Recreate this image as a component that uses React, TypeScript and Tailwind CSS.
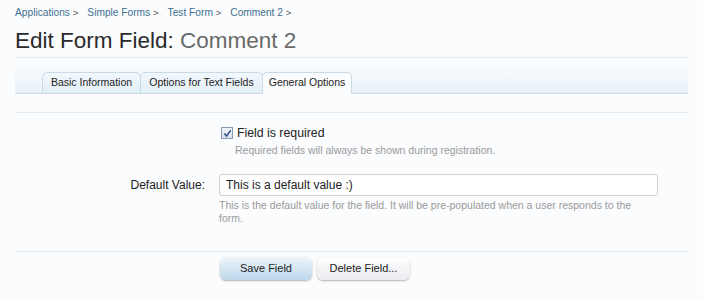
import React from 'react';

const crumbs = ['Applications', 'Simple Forms', 'Test Form', 'Comment 2'];
const tabs = [
    { label: 'Basic Information', active: false, width: 'w-[99px]' },
    { label: 'Options for Text Fields', active: false, width: 'w-[123px]' },
    { label: 'General Options', active: true, width: 'w-[90px]' },
];

export default function App() {
    return (
        <div className="min-h-[300px] bg-[#fbfcfe] px-[15px] pt-[6px] font-['Liberation_Sans',Arial,sans-serif] text-[#222]">
            {/* Breadcrumb */}
            <nav className="flex h-[14px] items-center gap-[9px] text-[10.2px] leading-[14px]">
                {crumbs.map((c) => (
                    <span key={c} className="text-[#3f6f8e]">
                        {c} <span className="text-[#555] text-[9.5px]">&gt;</span>
                    </span>
                ))}
            </nav>

            {/* Title */}
            <h1 className="mt-[6px] h-[30px] text-[22.5px] leading-[30px] text-[#2a2a2a]">
                Edit Form Field: <span className="text-[#6a6a6a]">Comment 2</span>
            </h1>
            <div className="mt-[1px] border-b border-[#e3ecf2]" />

            {/* Tabs */}
            <div className="mt-[4px] flex h-[32px] items-end border-b border-[#c8dae6] bg-gradient-to-b from-[#fbfcfe] to-[#e9f2f8] pl-[27px]">
                {tabs.map((t) => (
                    <div
                        key={t.label}
                        className={`-mb-px -mr-px flex h-[22px] items-center justify-center rounded-t-[5px] border border-[#c8dae6] text-[10.5px] ${t.width} ${
                            t.active ? 'border-b-[#fbfcfe] bg-[#fbfcfe]' : 'bg-gradient-to-b from-[#f2f8fc] to-[#e2eef6]'
                        }`}
                    >
                        {t.label}
                    </div>
                ))}
            </div>

            <div className="mt-[18px] border-b border-[#e3ecf2]" />

            {/* Form */}
            <div className="mt-[12px] grid grid-cols-[190px_1fr] gap-x-[14px]">
                <div />
                <div>
                    <label className="flex items-center gap-[4px] text-[12.3px] leading-[16px]">
                        <span className="ml-[2px] flex h-[12px] w-[12px] items-center justify-center border border-[#8a9bb0] bg-gradient-to-b from-[#eef2f7] to-[#d9e2ec]">
                            <svg viewBox="0 0 10 10" className="h-[9px] w-[9px]">
                                <path d="M1.5 5 L4 7.8 L8.5 1.5" fill="none" stroke="#2b4a86" strokeWidth="1.6" />
                            </svg>
                        </span>
                        Field is required
                    </label>
                    <p className="mt-[3px] pl-[16px] text-[10.5px] leading-[13px] text-[#9a9a9a]">
                        Required fields will always be shown during registration.
                    </p>
                </div>

                <div className="mt-[17px] flex h-[22px] items-center justify-end text-[12px]">Default Value:</div>
                <div className="mt-[17px]">
                    <div className="flex h-[22px] w-[439px] items-center rounded-[3px] border border-[#d0d0d0] bg-white px-[6px] text-[12px]">
                        This is a default value :)
                    </div>
                    <p className="mt-[3px] w-[425px] text-[10.5px] leading-[13px] text-[#9a9a9a]">
                        This is the default value for the field. It will be pre-populated when a user responds to the form.
                    </p>
                </div>
            </div>

            <div className="mt-[26px] border-b border-[#e3ecf2]" />

            {/* Buttons */}
            <div className="mt-[5px] flex gap-[5px] pl-[205px]">
                <button className="h-[23px] w-[92px] rounded-[6px] bg-gradient-to-b from-[#eef5fa] to-[#bcd7ea] text-[11px] text-[#222] shadow-[0_1px_2px_rgba(0,0,0,0.3)]">
                    Save Field
                </button>
                <button className="h-[23px] w-[93px] rounded-[6px] bg-gradient-to-b from-[#ffffff] to-[#e9ebee] text-[11px] text-[#222] shadow-[0_1px_2px_rgba(0,0,0,0.3)]">
                    Delete Field...
                </button>
            </div>
        </div>
    );
}
